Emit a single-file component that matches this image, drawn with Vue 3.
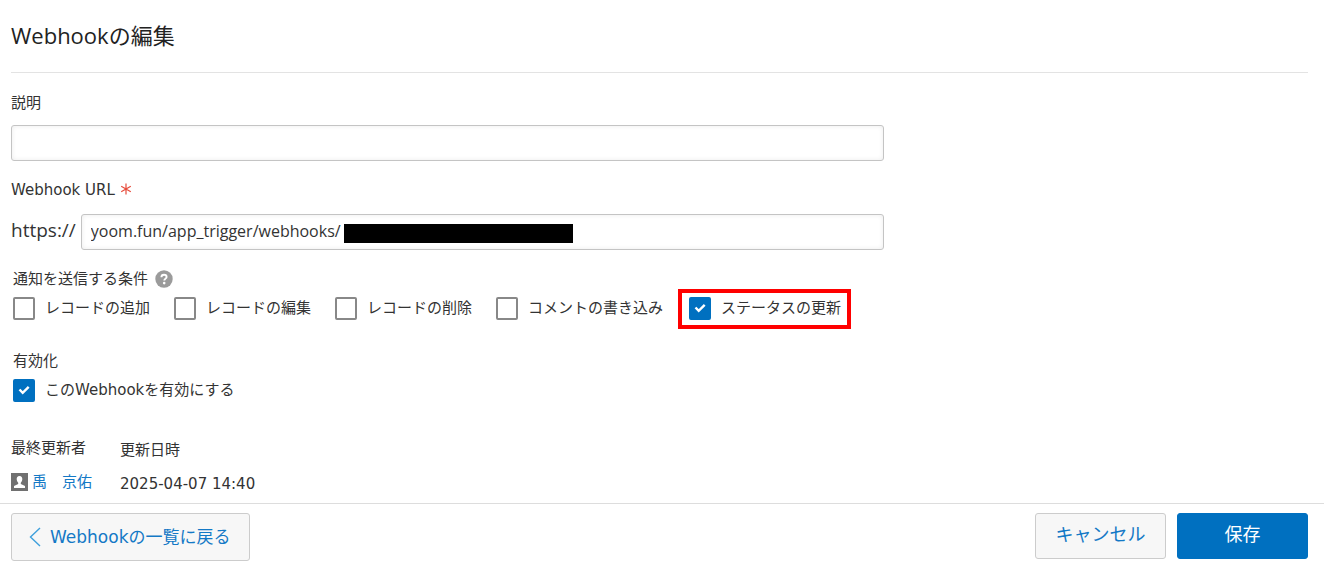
<script setup>
import { ref } from 'vue'

const description = ref('')
const url = ref('yoom.fun/app_trigger/webhooks/')
const conditions = ref([
  { id: 'add', label: 'レコードの追加', checked: false },
  { id: 'edit', label: 'レコードの編集', checked: false },
  { id: 'delete', label: 'レコードの削除', checked: false },
  { id: 'comment', label: 'コメントの書き込み', checked: false },
  { id: 'status', label: 'ステータスの更新', checked: true, marked: true }
])
const enabled = ref(true)
</script>

<template>
  <form class="page" @submit.prevent>
    <main class="content">
      <h1 class="title">Webhookの編集</h1>

      <label class="label" for="description">説明</label>
      <input id="description" v-model="description" class="text-box" type="text" />

      <label class="label url-label" for="url">Webhook URL
        <svg class="required" viewBox="0 0 12 12" aria-hidden="true"><path d="M6 0.500V11.500M1.200 3.200L10.800 8.800M10.800 3.200L1.200 8.800" /></svg>
      </label>
      <div class="url-row">
        <span class="scheme">https://</span>
        <div class="url-field">
          <input id="url" v-model="url" class="text-box" type="text" />
          <span class="mask"></span>
        </div>
      </div>

      <fieldset class="group">
        <legend class="legend">
          通知を送信する条件
          <svg class="help" viewBox="0 0 18 18" aria-hidden="true">
            <circle cx="9" cy="9" r="8.7" fill="#9b9b9b" />
            <path d="M6.4 7.2C6.4 5.6 7.5 4.7 9 4.7s2.6.9 2.6 2.2c0 1.7-2.3 1.8-2.3 3.7" fill="none" stroke="#fff" stroke-width="1.9" />
            <circle cx="9.2" cy="13.1" r="1.3" fill="#fff" />
          </svg>
        </legend>
        <div class="checks">
          <label v-for="c in conditions" :key="c.id" class="check" :class="{ marked: c.marked }" :for="c.id">
            <input :id="c.id" v-model="c.checked" type="checkbox" />
            <svg class="tick" viewBox="0 0 22 22" aria-hidden="true"><path d="M6.500 10.500l3.200 3.400 6-6" /></svg>
            <span>{{ c.label }}</span>
          </label>
        </div>
      </fieldset>

      <fieldset class="group enable">
        <legend class="legend">有効化</legend>
        <label class="check" for="enabled">
          <input id="enabled" v-model="enabled" type="checkbox" />
          <svg class="tick" viewBox="0 0 22 22" aria-hidden="true"><path d="M6.500 10.500l3.200 3.400 6-6" /></svg>
          <span>このWebhookを有効にする</span>
        </label>
      </fieldset>

      <dl class="meta">
        <div class="meta-item">
          <dt>最終更新者</dt>
          <dd>
            <a class="user" href="#">
              <svg class="avatar" viewBox="0 0 17 18" aria-hidden="true">
                <rect width="17" height="18" fill="#707070" />
                <path d="M8.500 3C6.500 3 5.600 4.300 5.700 6.200c.1 1.600.7 2.700 1.500 3.500v1.400L3 13v2h11v-2l-4.200-1.900V9.700c.8-.8 1.400-1.900 1.500-3.500C11.400 4.300 10.500 3 8.500 3z" fill="#fff" />
              </svg>
              <span>禹　京佑</span>
            </a>
          </dd>
        </div>
        <div class="meta-item date">
          <dt>更新日時</dt>
          <dd>2025-04-07 14:40</dd>
        </div>
      </dl>
    </main>

    <footer class="footer">
      <button class="btn back" type="button">
        <svg class="chevron" viewBox="0 0 12 20" aria-hidden="true"><path d="M11 1L1.500 10L11 19" /></svg>
        Webhookの一覧に戻る
      </button>
      <div class="actions">
        <button class="btn action" type="button">キャンセル</button>
        <button class="btn action primary" type="submit">保存</button>
      </div>
    </footer>
  </form>
</template>

<style>
body {
  background: #fff;
}
</style>

<style scoped>
.page,
.page * {
  box-sizing: border-box;
}
.page {
  display: flex;
  flex-direction: column;
  min-height: 100vh;
  font: 15px/20px "DejaVu Sans", "Noto Sans CJK JP", sans-serif;
  color: #333;
}
.content {
  flex: 1;
  padding: 19px 16px 0 11px;
}
.title {
  margin: 0 0 20px;
  padding-bottom: 21px;
  border-bottom: 1px solid #e3e3e3;
  font: 22px/32px "Open Sans", "Noto Sans CJK JP", sans-serif;
  color: #222;
}
.label {
  display: block;
  margin-bottom: 12px;
}
.text-box {
  display: block;
  width: 100%;
  max-width: 873px;
  height: 36px;
  padding: 0 9px 2px;
  border: 1px solid #c4c4c4;
  border-radius: 3px;
  background: #fff;
  box-shadow: inset 0 0 5px #ececec;
  font: 16px/20px "Open Sans", "Noto Sans CJK JP", sans-serif;
  color: #333;
}
.url-label {
  margin-top: 19px;
  margin-bottom: 14px;
}
.required {
  width: 12px;
  height: 12px;
  fill: none;
  stroke: #e74c3c;
  stroke-width: 1.2;
}
.url-row {
  display: flex;
  align-items: center;
  gap: 5px;
  max-width: 873px;
}
.scheme {
  flex: none;
  padding-bottom: 4px;
  font: 19px/32px "Open Sans", sans-serif;
}
.url-field {
  position: relative;
  flex: 1;
}
.mask {
  position: absolute;
  top: 10px;
  left: 263px;
  width: 229px;
  height: 19px;
  background: #000;
}
.group {
  margin: 19px 0 0;
  padding: 0 0 0 2px;
  border: 0;
}
.legend {
  display: flex;
  align-items: center;
  gap: 7px;
  height: 20px;
  margin-bottom: 8px;
  padding: 0;
}
.help {
  width: 18px;
  height: 18px;
}
.checks {
  display: flex;
  flex-wrap: wrap;
  gap: 8px 24px;
}
.check {
  position: relative;
  display: inline-flex;
  align-items: center;
  gap: 10px;
}
.check span {
  padding-bottom: 2px;
}
.check input {
  appearance: none;
  flex: none;
  width: 22px;
  height: 23px;
  margin: 0;
  border: 2px solid #888;
  border-radius: 2px;
  background: #fff;
}
.check input:checked {
  border-color: #0070c0;
  background: #0070c0;
}
.tick {
  position: absolute;
  top: 0;
  left: 0;
  width: 22px;
  height: 22px;
  fill: none;
  stroke: #fff;
  stroke-width: 2.4;
  pointer-events: none;
}
.marked {
  margin-left: 2px;
}
.marked::after {
  content: "";
  position: absolute;
  inset: -8px -10px -9px -11px;
  border: 4px solid #f00;
  pointer-events: none;
}
.enable {
  margin-top: 31px;
}
.meta {
  display: flex;
  gap: 28px;
  margin: 31px 0 0;
}
.meta dd {
  margin: 14px 0 0;
}
.date {
  padding-top: 2px;
}
.user {
  display: flex;
  align-items: center;
  gap: 4px;
  color: #1479c6;
  text-decoration: none;
}
.avatar {
  width: 17px;
  height: 18px;
}
.footer {
  display: flex;
  justify-content: space-between;
  align-items: flex-start;
  height: 63px;
  padding: 9px 16px 0 11px;
  border-top: 1px solid #ddd;
}
.actions {
  display: flex;
  gap: 11px;
}
.btn {
  border: 1px solid #ccc;
  border-radius: 3px;
  background: #f7f7f7;
  font: 18px/24px "DejaVu Sans", "Noto Sans CJK JP", sans-serif;
  color: #1479c6;
}
.back {
  display: flex;
  align-items: center;
  gap: 9px;
  height: 48px;
  padding: 0 19px 0 17px;
  font-size: 17px;
}
.chevron {
  width: 12px;
  height: 20px;
  fill: none;
  stroke: #3fa0dc;
  stroke-width: 1.4;
}
.action {
  width: 131px;
  height: 46px;
  padding: 0 0 2px;
}
.primary {
  border-color: #0070c0;
  background: #0070c0;
  color: #fff;
}
</style>
